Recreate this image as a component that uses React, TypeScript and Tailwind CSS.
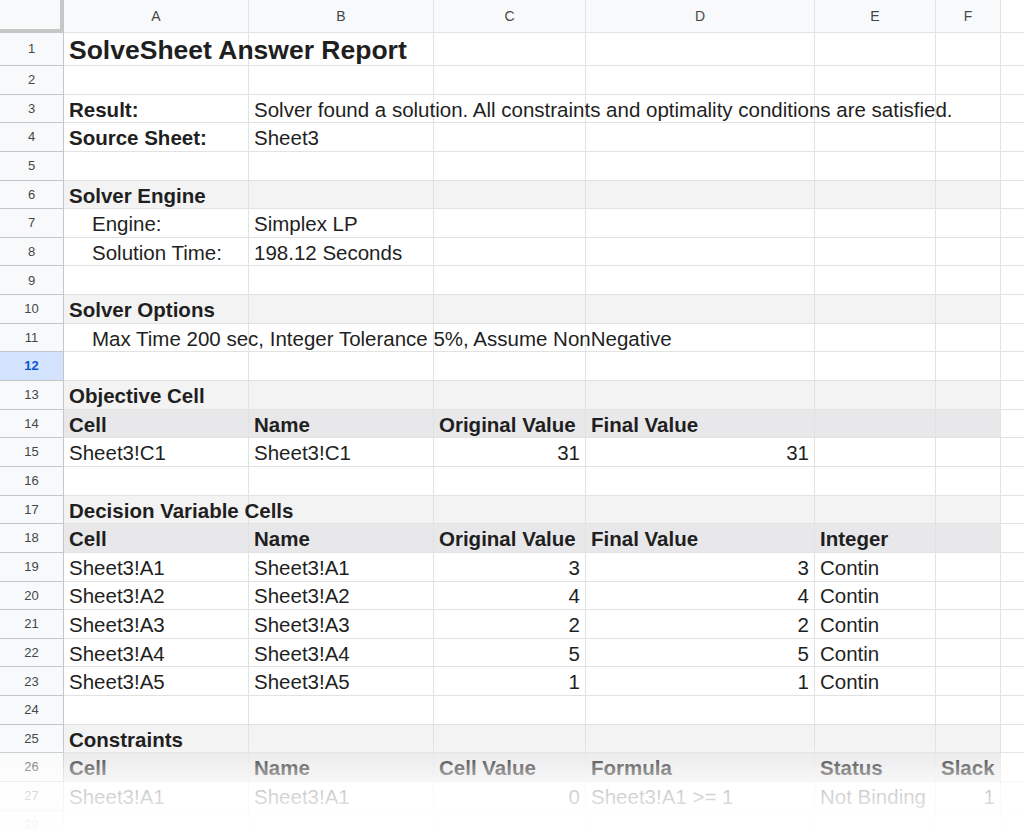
import React from "react";

type Cell = { t?: string; b?: boolean; r?: boolean; ind?: boolean; span?: number; big?: boolean };
type Row = { cells: Cell[]; bg?: "sec" | "hdr" };

const cols = [185, 185, 152, 229, 121, 65, 23];
const letters = ["A", "B", "C", "D", "E", "F", ""];

const e = (): Cell => ({});
const rows: Row[] = [
  { cells: [{ t: "SolveSheet Answer Report", b: true, big: true }] },
  { cells: [] },
  { cells: [{ t: "Result:", b: true }, { t: "Solver found a solution. All constraints and optimality conditions are satisfied." }] },
  { cells: [{ t: "Source Sheet:", b: true }, { t: "Sheet3" }] },
  { cells: [] },
  { cells: [{ t: "Solver Engine", b: true }], bg: "sec" },
  { cells: [{ t: "Engine:", ind: true }, { t: "Simplex LP" }] },
  { cells: [{ t: "Solution Time:", ind: true }, { t: "198.12 Seconds" }] },
  { cells: [] },
  { cells: [{ t: "Solver Options", b: true }], bg: "sec" },
  { cells: [{ t: "Max Time 200 sec, Integer Tolerance 5%, Assume NonNegative", ind: true }] },
  { cells: [] },
  { cells: [{ t: "Objective Cell", b: true }], bg: "sec" },
  { cells: [{ t: "Cell", b: true }, { t: "Name", b: true }, { t: "Original Value", b: true }, { t: "Final Value", b: true }], bg: "hdr" },
  { cells: [{ t: "Sheet3!C1" }, { t: "Sheet3!C1" }, { t: "31", r: true }, { t: "31", r: true }] },
  { cells: [] },
  { cells: [{ t: "Decision Variable Cells", b: true }], bg: "sec" },
  { cells: [{ t: "Cell", b: true }, { t: "Name", b: true }, { t: "Original Value", b: true }, { t: "Final Value", b: true }, { t: "Integer", b: true }], bg: "hdr" },
  ...[["A1", "3"], ["A2", "4"], ["A3", "2"], ["A4", "5"], ["A5", "1"]].map(([c, v]) => ({
    cells: [{ t: "Sheet3!" + c }, { t: "Sheet3!" + c }, { t: v, r: true }, { t: v, r: true }, { t: "Contin" }],
  })),
  { cells: [] },
  { cells: [{ t: "Constraints", b: true }], bg: "sec" },
  { cells: [{ t: "Cell", b: true }, { t: "Name", b: true }, { t: "Cell Value", b: true }, { t: "Formula", b: true }, { t: "Status", b: true }, { t: "Slack", b: true }], bg: "hdr" },
  { cells: [{ t: "Sheet3!A1" }, { t: "Sheet3!A1" }, { t: "0", r: true }, { t: "Sheet3!A1 >= 1" }, { t: "Not Binding" }, { t: "1", r: true }] },
  { cells: [] },
];

export default function App() {
  return (
    <div className="relative w-[1024px] h-[836px] overflow-hidden bg-white text-[#1f1f1f]" style={{ fontFamily: "Arial, 'Liberation Sans', sans-serif" }}>
      <div className="flex h-[33px]">
        <div className="w-[64px] shrink-0 bg-[#f8f9fa] border-r-[4px] border-b-[4px] border-[#c4c7c5]" />
        {cols.map((w, i) => (
          <div key={i} style={{ width: w }} className={`shrink-0 flex items-center justify-center text-[14px] text-[#444746] border-b border-[#e1e3e1] ${i < 6 ? "border-r" : ""} ${i === 6 ? "bg-white" : "bg-[#f8f9fa]"}`}>{letters[i]}</div>
        ))}
      </div>
      {rows.map((row, ri) => {
        const sel = ri === 11;
        const h = ri === 0 ? "h-[33px]" : "h-[28.65px]";
        const bg = row.bg === "sec" ? "bg-[#f3f3f3]" : row.bg === "hdr" ? "bg-[#e8e8ea]" : "bg-white";
        return (
          <div key={ri} className={`flex ${h}`}>
            <div className={`w-[64px] shrink-0 flex items-center justify-center text-[13px] border-r border-b border-[#c4c7c5] ${sel ? "bg-[#d3e3fd] text-[#0b57d0] font-bold" : "bg-[#f8f9fa] text-[#444746]"}`}>{ri + 1}</div>
            {cols.map((w, ci) => {
              const c = row.cells[ci] || e();
              const last = ci === 6;
              return (
                <div key={ci} style={{ width: w }} className={`shrink-0 relative border-b border-[#e1e3e1] ${ci < 6 ? "border-r" : ""} ${last ? "bg-white" : bg}`}>
                  {c.t && (
                    <div className={`absolute inset-y-0 pt-[3px] flex items-center whitespace-nowrap ${c.r ? "right-[5px]" : c.ind ? "left-[28px]" : "left-[5px]"} ${c.b ? "font-bold" : ""} ${c.big ? "text-[26.5px]" : "text-[20.5px]"} z-10`}>{c.t}</div>
                  )}
                </div>
              );
            })}
          </div>
        );
      })}
      <div className="absolute left-0 right-0 top-[745px] h-[40px] bg-gradient-to-b from-white/0 to-white/75 z-20" />
      <div className="absolute left-0 right-0 top-[785px] bottom-0 bg-gradient-to-b from-white/75 to-white z-20" />
    </div>
  );
}
